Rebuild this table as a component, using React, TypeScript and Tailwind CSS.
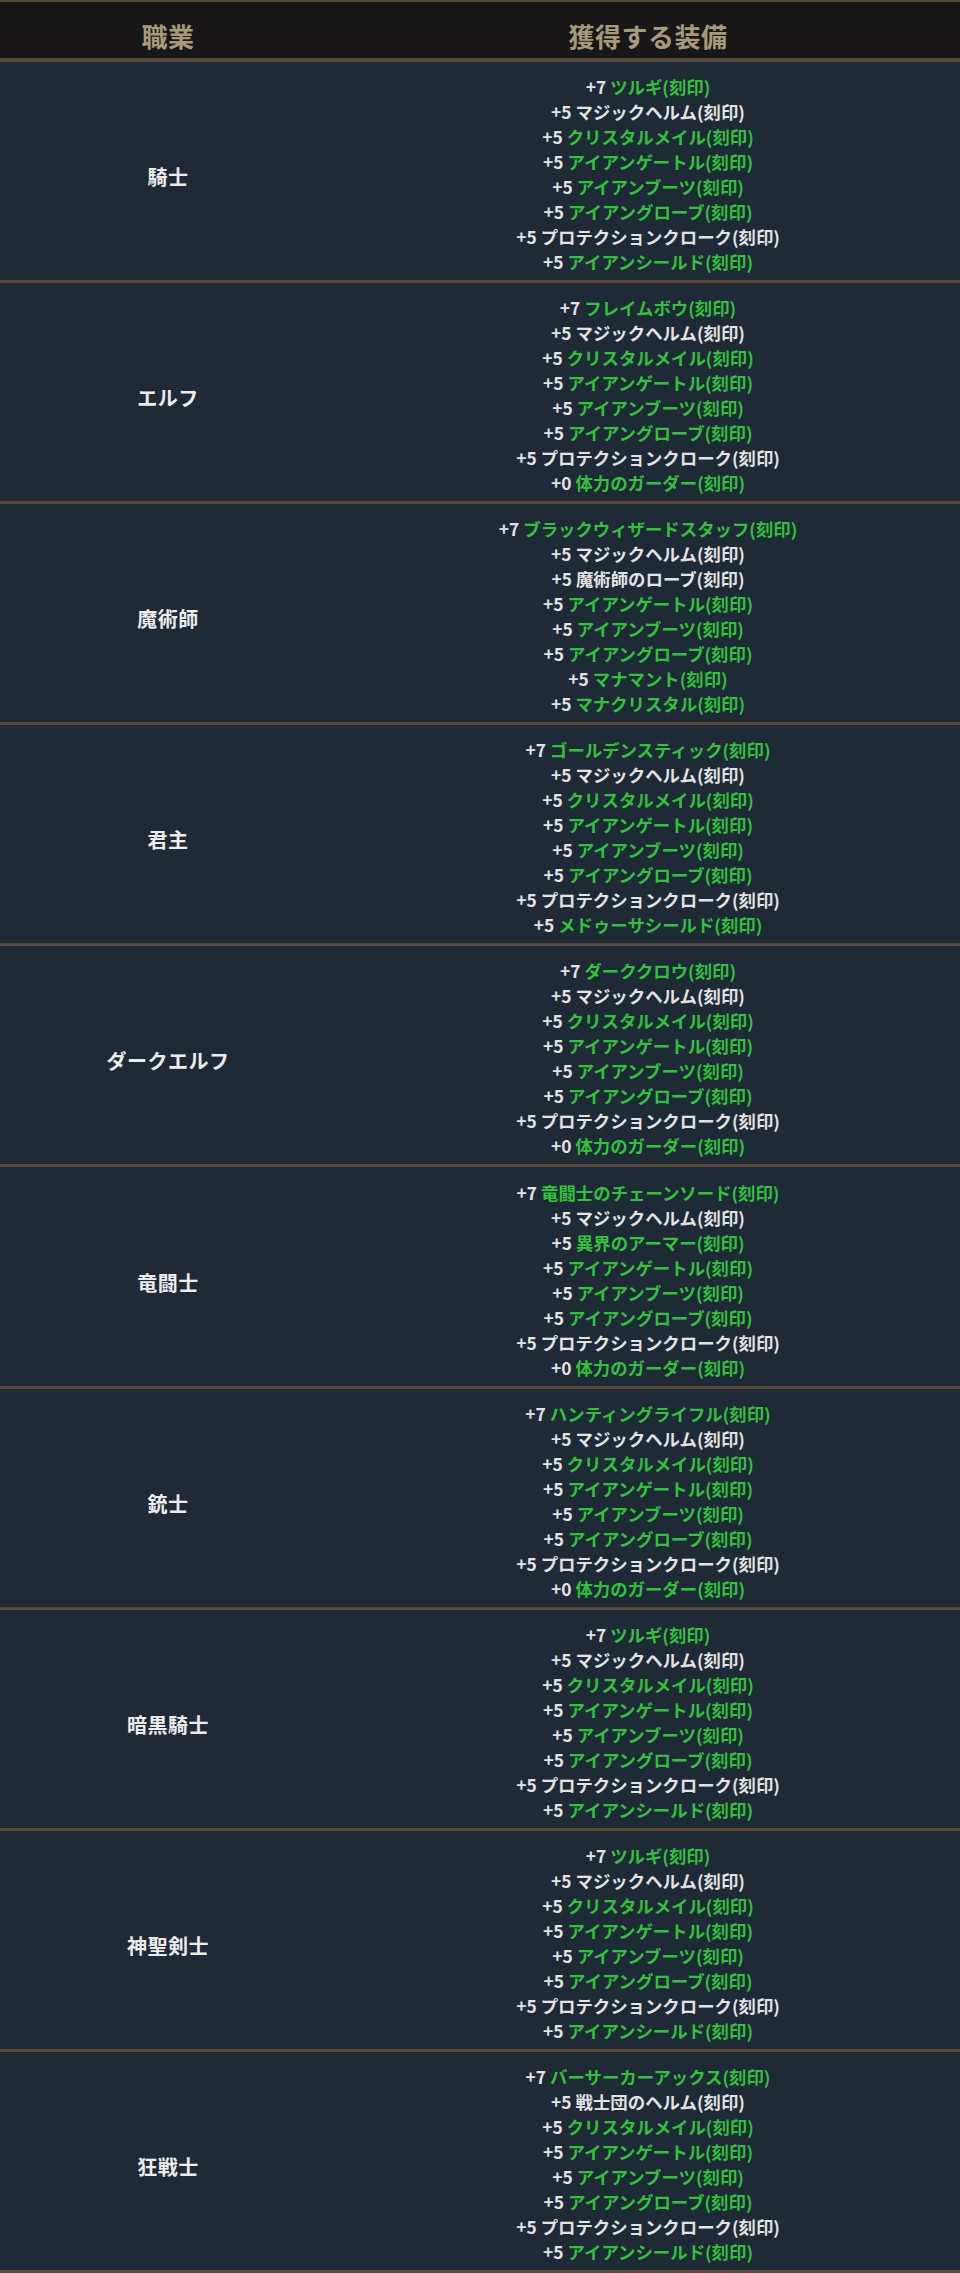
const G = true
const W = false

type Item = [string, string, boolean]

const helm: Item = ['+5', 'マジックヘルム(刻印)', W]
const mail: Item = ['+5', 'クリスタルメイル(刻印)', G]
const gaiter: Item = ['+5', 'アイアンゲートル(刻印)', G]
const boots: Item = ['+5', 'アイアンブーツ(刻印)', G]
const glove: Item = ['+5', 'アイアングローブ(刻印)', G]
const cloak: Item = ['+5', 'プロテクションクローク(刻印)', W]
const shield: Item = ['+5', 'アイアンシールド(刻印)', G]
const guarder: Item = ['+0', '体力のガーダー(刻印)', G]

const rows: { job: string; items: Item[] }[] = [
  { job: '騎士', items: [['+7', 'ツルギ(刻印)', G], helm, mail, gaiter, boots, glove, cloak, shield] },
  { job: 'エルフ', items: [['+7', 'フレイムボウ(刻印)', G], helm, mail, gaiter, boots, glove, cloak, guarder] },
  {
    job: '魔術師',
    items: [
      ['+7', 'ブラックウィザードスタッフ(刻印)', G],
      helm,
      ['+5', '魔術師のローブ(刻印)', W],
      gaiter,
      boots,
      glove,
      ['+5', 'マナマント(刻印)', G],
      ['+5', 'マナクリスタル(刻印)', G],
    ],
  },
  {
    job: '君主',
    items: [['+7', 'ゴールデンスティック(刻印)', G], helm, mail, gaiter, boots, glove, cloak, ['+5', 'メドゥーサシールド(刻印)', G]],
  },
  { job: 'ダークエルフ', items: [['+7', 'ダーククロウ(刻印)', G], helm, mail, gaiter, boots, glove, cloak, guarder] },
  {
    job: '竜闘士',
    items: [['+7', '竜闘士のチェーンソード(刻印)', G], helm, ['+5', '異界のアーマー(刻印)', G], gaiter, boots, glove, cloak, guarder],
  },
  { job: '銃士', items: [['+7', 'ハンティングライフル(刻印)', G], helm, mail, gaiter, boots, glove, cloak, guarder] },
  { job: '暗黒騎士', items: [['+7', 'ツルギ(刻印)', G], helm, mail, gaiter, boots, glove, cloak, shield] },
  { job: '神聖剣士', items: [['+7', 'ツルギ(刻印)', G], helm, mail, gaiter, boots, glove, cloak, shield] },
  {
    job: '狂戦士',
    items: [['+7', 'バーサーカーアックス(刻印)', G], ['+5', '戦士団のヘルム(刻印)', W], mail, gaiter, boots, glove, cloak, shield],
  },
]

export default function App() {
  return (
    <div
      className="w-[960px] bg-[#1f2a37] font-bold"
      style={{ fontFamily: '"Noto Sans CJK JP", "Noto Sans", sans-serif' }}
    >
      {/* header */}
      <div className="flex h-[62px] border-t-2 border-b-4 border-[#5a4a37] bg-[#181617] text-[26px] text-[#a69a7b] tracking-[0.5px]">
        <div className="w-[336px] flex items-center justify-center pt-[10px]">職業</div>
        <div className="flex-1 flex items-center justify-center pt-[10px]">獲得する装備</div>
      </div>

      {rows.map((row) => (
        <div key={row.job} className="flex h-[221.1px] border-b-[3px] border-[#5a4a37]">
          <div className="w-[336px] flex items-center justify-center pt-[12px] text-[20px] tracking-[0.5px] text-[#ececec]">
            {row.job}
          </div>
          <div className="flex-1 flex flex-col items-center justify-center pt-[6px] text-[17.4px] leading-[25px]">
            {row.items.map((it, i) => (
              <div key={i} className="text-[#e3e3e3]">
                {it[0]} <span className={it[2] ? 'text-[#31c23b]' : 'text-[#e3e3e3]'}>{it[1]}</span>
              </div>
            ))}
          </div>
        </div>
      ))}
    </div>
  )
}
